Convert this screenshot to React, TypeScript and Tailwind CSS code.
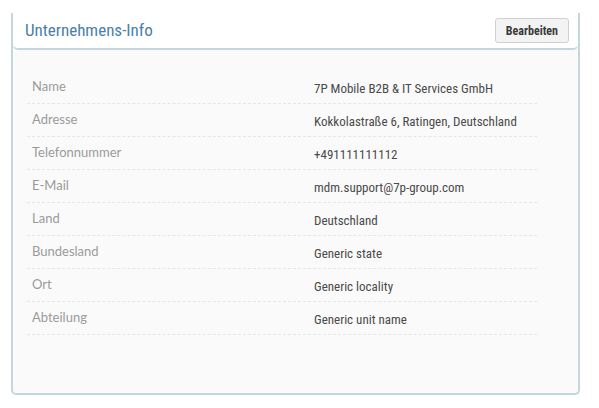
import React from "react";

const rows: [string, string][] = [
  ["Name", "7P Mobile B2B & IT Services GmbH"],
  ["Adresse", "Kokkolastraße 6, Ratingen, Deutschland"],
  ["Telefonnummer", "+491111111112"],
  ["E-Mail", "mdm.support@7p-group.com"],
  ["Land", "Deutschland"],
  ["Bundesland", "Generic state"],
  ["Ort", "Generic locality"],
  ["Abteilung", "Generic unit name"],
];

const cond = {
  fontFamily: '"Roboto Condensed", "Liberation Sans Narrow", "DejaVu Sans Condensed", Roboto, sans-serif',
};

export default function App() {
  return (
    <div className="min-h-screen bg-white pt-[13px] pl-[11px]">
      <div className="w-[569px] h-[382px] border-x-2 border-b-2 border-[#c4d7e0] rounded-b-[5px] bg-[#fafafa] flex flex-col">
        <div className="h-[37px] shrink-0 bg-white border-b-2 border-[#c4d7e0] rounded-b-[5px] flex items-center justify-between pl-[12px] pr-[9px]">
          <span className="text-[17px] text-[#4a80a8] font-stretch-condensed" style={cond}>
            Unternehmens-Info
          </span>
          <button className="h-[25px] px-[10px] bg-[#f3f3f3] border border-[#d0d0d0] rounded-[3px] text-[12px] font-bold text-[#3a3a3a] font-stretch-condensed" style={cond}>
            Bearbeiten
          </button>
        </div>
        <div className="pl-[14px] pt-[21px]">
          {rows.map(([k, v]) => (
            <div key={k} className="w-[510px] h-[33px] flex items-start border-b border-dashed border-[#e6e6e6]">
              <div className="w-[287px] pl-[5px] pt-[5px] leading-[20px] text-[13px] text-[#9a9a9a] font-['Lato',sans-serif]">
                {k}
              </div>
              <div className="pt-[8px] leading-[20px] text-[13px] text-[#4a4a4a] font-stretch-condensed" style={cond}>
                {v}
              </div>
            </div>
          ))}
        </div>
      </div>
    </div>
  );
}
